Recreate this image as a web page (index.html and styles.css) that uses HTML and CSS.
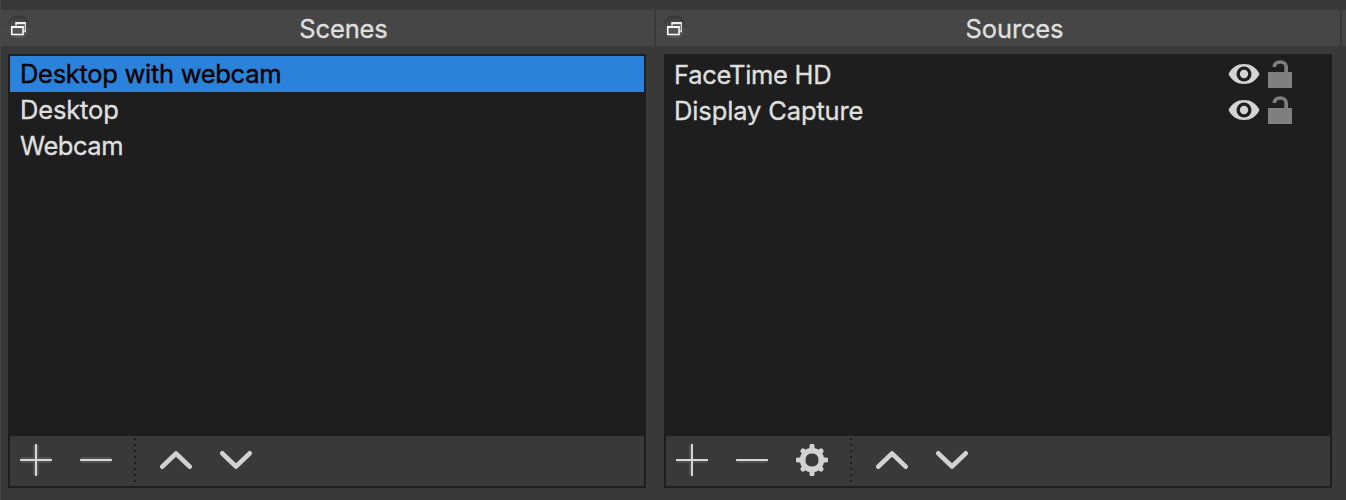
FILE: index.html
```html
<!DOCTYPE html>
<html lang="en">
<head>
<meta charset="utf-8">
<title>Scenes and Sources</title>
<link rel="stylesheet" href="styles.css">
</head>
<body>
<svg class="defs" width="0" height="0" aria-hidden="true">
  <defs>
    <radialGradient id="glow" cx="50%" cy="68%" r="66%">
      <stop offset="0" stop-color="#626262"/><stop offset=".55" stop-color="#4e4e4e"/><stop offset="1" stop-color="#363636"/>
    </radialGradient>
    <symbol id="float" viewBox="0 0 24 26">
      <circle cx="12.500" cy="13" r="11.500" fill="url(#glow)"/>
      <path d="M10 12V9.500H19.300V17.500H17" fill="none" stroke="#ddd" stroke-width="1.300"/>
      <path d="M9.300 9H20" stroke="#eee" stroke-width="2"/>
      <rect x="5.800" y="13" width="11.200" height="7.500" fill="#555" stroke="#fff" stroke-width="1.500"/>
      <path d="M5 13H17.700" stroke="#fff" stroke-width="2"/>
    </symbol>
    <symbol id="plus" viewBox="0 0 32 32">
      <path d="M1 16H31M16 1V31" stroke="#525252" stroke-width="6"/>
      <path d="M0 16H32M16 0V32" stroke="#d6d6d6" stroke-width="2"/>
    </symbol>
    <symbol id="minus" viewBox="0 0 32 32">
      <path d="M1 16H31" stroke="#525252" stroke-width="6"/>
      <path d="M0 16H32" stroke="#d6d6d6" stroke-width="2"/>
    </symbol>
    <symbol id="plus-offset" viewBox="0 0 32 32">
      <path d="M1 17H31M15 1V31" stroke="#525252" stroke-width="4"/>
      <path d="M0 16H32M16 0V32" stroke="#d6d6d6" stroke-width="2"/>
    </symbol>
    <symbol id="minus-offset" viewBox="0 0 32 32">
      <path d="M1 17H31" stroke="#525252" stroke-width="4"/>
      <path d="M0 16H32" stroke="#d6d6d6" stroke-width="2"/>
    </symbol>
    <symbol id="up" viewBox="0 0 32 32">
      <path d="M2.300 22.700L16 9.500L29.700 22.700" fill="none" stroke="#d2d2d2" stroke-width="4.600" stroke-linecap="round" stroke-linejoin="round"/>
    </symbol>
    <symbol id="down" viewBox="0 0 32 32">
      <path d="M2.300 9.300L16 22.500L29.700 9.300" fill="none" stroke="#d2d2d2" stroke-width="4.600" stroke-linecap="round" stroke-linejoin="round"/>
    </symbol>
    <symbol id="gear" viewBox="0 0 32 32">
      <circle cx="16" cy="16" r="9.500" fill="none" stroke="#d2d2d2" stroke-width="5.400"/>
      <path d="M16 7V2M16 25V30M7 16H2M25 16H30M9 9L7 7M23 9L25 7M9 23L7 25M23 23L25 25" fill="none" stroke="#d2d2d2" stroke-width="5" stroke-linecap="round"/>
    </symbol>
    <symbol id="eye" viewBox="0 0 32 22">
      <path d="M0.500 11C4 4 9.500 1 16 1S28 4 31.500 11C28 18 22.500 21 16 21S4 18 0.500 11Z" fill="#d4d4d4"/>
      <circle cx="16" cy="11" r="7.500" fill="#1f1f1f"/>
      <circle cx="16" cy="11" r="4.200" fill="#d4d4d4"/>
    </symbol>
    <symbol id="lock" viewBox="0 0 24 28">
      <path d="M6.300 7C6.500 3.500 9 2 12.300 2S18.200 4 18.200 7V13" fill="none" stroke="#7f7f7f" stroke-width="3.700"/>
      <rect y="12" width="24" height="16" fill="#7f7f7f"/>
    </symbol>
  </defs>
</svg>
<main class="docks">
  <section class="dock scenes">
    <header class="titlebar"><svg class="float"><use href="#float"/></svg><h2 class="title">Scenes</h2></header>
    <div class="frame">
      <ul class="list">
        <li class="row selected"><span>Desktop with webcam</span></li>
        <li class="row"><span class="t-desktop">Desktop</span></li>
        <li class="row"><span class="t-webcam">Webcam</span></li>
      </ul>
      <div class="toolbar">
        <svg class="icon"><use href="#plus"/></svg>
        <svg class="icon"><use href="#minus"/></svg>
        <i class="divider"></i>
        <svg class="icon"><use href="#up"/></svg>
        <svg class="icon"><use href="#down"/></svg>
      </div>
    </div>
  </section>
  <section class="dock sources">
    <header class="titlebar"><svg class="float"><use href="#float"/></svg><h2 class="title">Sources</h2></header>
    <div class="frame">
      <ul class="list">
        <li class="row"><span>FaceTime HD</span><svg class="eye"><use href="#eye"/></svg><svg class="lock"><use href="#lock"/></svg></li>
        <li class="row"><span class="t-display">Display Capture</span><svg class="eye"><use href="#eye"/></svg><svg class="lock"><use href="#lock"/></svg></li>
      </ul>
      <div class="toolbar">
        <svg class="icon"><use href="#plus-offset"/></svg>
        <svg class="icon"><use href="#minus-offset"/></svg>
        <svg class="icon"><use href="#gear"/></svg>
        <i class="divider"></i>
        <svg class="icon"><use href="#up"/></svg>
        <svg class="icon"><use href="#down"/></svg>
      </div>
    </div>
  </section>
  <div class="next-dock"></div>
</main>
</body>
</html>
```
FILE: styles.css
```css
* { box-sizing: border-box; }
body {
  margin: 0;
  height: 500px;
  overflow: hidden;
  background: #393939;
  color: #dfdfdf;
  font: 25.5px/36px Inter, "Liberation Sans", sans-serif;
  -webkit-text-stroke: 0.35px currentColor;
}
svg { display: block; flex: none; }
.defs { position: absolute; }
.docks {
  display: grid;
  grid-template-columns: 653px 684px 4px;
  column-gap: 2px;
  height: 500px;
  padding-top: 10px;
  border-left: 1px solid #474747;
  margin-right: -1px;
}
.scenes { margin-left: -1px; }
.titlebar {
  display: flex;
  align-items: center;
  height: 36px;
  padding-left: 6px;
  background: #464646;
}
.float { width: 24px; height: 26px; margin-top: -3px; }
.title {
  flex: 1;
  margin: 0 0 0 3px;
  padding-top: 2px;
  font-size: 25.5px;
  font-weight: 400;
  line-height: 36px;
  text-align: center;
  letter-spacing: -0.15px;
}
.frame {
  display: flex;
  flex-direction: column;
  height: 434px;
  margin: 8px 8px 0;
  padding: 2px;
  background: #1e1e1e;
}
.list { flex: 1; margin: 0; padding: 0; list-style: none; }
.row {
  display: flex;
  align-items: center;
  height: 36px;
  padding-left: 10px;
  white-space: nowrap;
  letter-spacing: -0.3px;
}
.row span { flex: 1; }
.t-desktop { letter-spacing: -0.15px; }
.t-webcam { letter-spacing: -0.45px; }
.t-display { letter-spacing: -0.13px; }
.selected { background: #2a82da; color: #000; }
.sources .row { padding: 2px 38px 0 8px; }
.eye { width: 32px; height: 22px; margin: -2px 8px 0 0; }
.lock { width: 24px; height: 28px; margin-top: -2px; }
.toolbar { display: flex; align-items: center; height: 50px; padding: 0 10px 2px; background: #393939; }
.icon { width: 32px; height: 32px; margin-right: 28px; }
.divider {
  align-self: flex-start;
  width: 2px;
  height: 44px;
  margin: 2px 24px 0 -6px;
  background: repeating-linear-gradient(#1e1e1e 0 2px, transparent 2px 6px);
}
.next-dock { height: 36px; background: #464646; }
```
